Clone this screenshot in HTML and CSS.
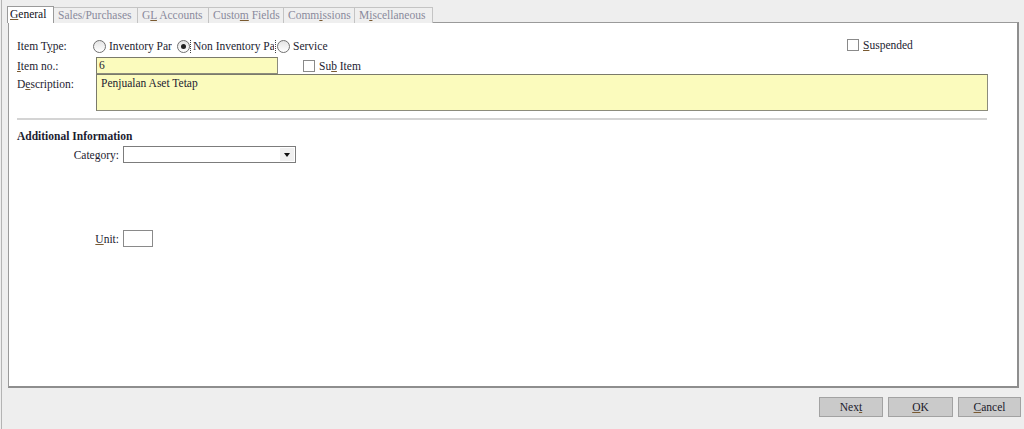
FILE: index.html
```html
<!DOCTYPE html>
<html lang="en">
<head>
  <meta charset="UTF-8">
  <title>Item</title>
  <link rel="stylesheet" href="styles.css">
</head>
<body>
  <div class="screen">
    <div class="tabs">
      <div class="tab active t-general"><u>G</u>eneral</div>
      <div class="tab t-sales">Sales/Purchases</div>
      <div class="tab t-gl">G<u>L</u> Accounts</div>
      <div class="tab t-custom">Custo<u>m</u> Fields</div>
      <div class="tab t-comm">Comm<u>i</u>ssions</div>
      <div class="tab t-misc">M<u>i</u>scellaneous</div>
    </div>

    <div class="panel">
      <div class="row row-type">
        <label class="lbl lbl-type">Item T<u>y</u>pe:</label>
        <div class="radio r-inv"><span class="dot"></span><span class="rtext">Inventory Part</span></div>
        <div class="radio r-non"><span class="dot checked"></span><span class="rtext focus">Non Inventory Part</span></div>
        <div class="radio r-svc"><span class="dot"></span><span class="rtext">Service</span></div>
        <div class="check c-susp"><span class="box"></span><span><u>S</u>uspended</span></div>
      </div>

      <div class="row row-no">
        <label class="lbl lbl-no"><u>I</u>tem no.:</label>
        <div class="field f-no">6</div>
        <div class="check c-sub"><span class="box"></span><span>Su<u>b</u> Item</span></div>
      </div>

      <div class="row row-desc">
        <label class="lbl lbl-desc">D<u>e</u>scription:</label>
        <div class="field f-desc">Penjualan Aset Tetap</div>
      </div>

      <div class="sep"></div>

      <div class="section">Additional Information</div>

      <div class="row row-cat">
        <label class="lbl lbl-right">Category:</label>
        <div class="select">
          <span class="arrow"></span>
        </div>
      </div>

      <div class="row row-unit">
        <label class="lbl lbl-right"><u>U</u>nit:</label>
        <div class="unit"></div>
      </div>
    </div>

    <div class="buttons">
      <div class="btn b-next">Nex<u>t</u></div>
      <div class="btn b-ok"><u>O</u>K</div>
      <div class="btn b-cancel"><u>C</u>ancel</div>
    </div>
  </div>
</body>
</html>
```

FILE: styles.css
```css
body {
  margin: 0;
  background: #eeeeee;
  font-family: "Liberation Serif", "DejaVu Serif", "Times New Roman", serif;
  font-size: 11.5px;
  color: #1c1c30;
}
u {
  text-decoration-color: #7a5a30;
}
.screen {
  width: 1024px;
  height: 429px;
  border-left: 1px solid #b4b4b4;
  margin-left: 1px;
  box-sizing: border-box;
  overflow: hidden;
}
.tabs {
  display: flex;
  margin-left: 5px;
  padding-top: 6px;
  height: 16px;
}
.tab {
  box-sizing: border-box;
  height: 16px;
  margin-top: 1px;
  padding-left: 4px;
  line-height: 14px;
  border: 1px solid #c4c4c4;
  border-bottom: none;
  border-left: none;
  color: #8a8a9c;
  background: #efefef;
  white-space: nowrap;
  overflow: hidden;
}
.tab.active {
  margin-top: 0;
  height: 17px;
  padding-left: 2px;
  border: 1px solid #9a9a9a;
  border-bottom: none;
  background: #ffffff;
  color: #101020;
  position: relative;
  z-index: 1;
}
.t-general { width: 47px; }
.t-sales { width: 84px; }
.t-gl { width: 71px; }
.t-custom { width: 75px; }
.t-comm { width: 71px; }
.t-misc { width: 78px; }

.panel {
  margin-left: 6px;
  width: 1011px;
  height: 366px;
  box-sizing: border-box;
  background: #ffffff;
  border: 1px solid #9a9a9a;
  border-right: 2px solid #8e8e8e;
  border-bottom: 2px solid #8e8e8e;
  padding: 14px 0 0 8px;
}
.row {
  display: flex;
  align-items: center;
}
.lbl {
  display: block;
  white-space: nowrap;
}
.row-type {
  height: 18px;
}
.lbl-type { width: 76px; }
.radio {
  display: flex;
  align-items: center;
  overflow: hidden;
  white-space: nowrap;
  flex: none;
}
.r-inv { width: 84px; }
.r-non { width: 100px; }
.r-svc { width: 60px; }
.dot {
  width: 11px;
  height: 11px;
  flex: none;
  border: 1px solid #707070;
  border-radius: 50%;
  background: linear-gradient(#e4e4e4, #ffffff);
  margin-right: 2px;
  position: relative;
}
.dot.checked::after {
  content: "";
  position: absolute;
  left: 3px;
  top: 3px;
  width: 5px;
  height: 5px;
  border-radius: 50%;
  background: #222222;
}
.rtext {
  overflow: hidden;
  line-height: 14px;
  padding: 0 1px;
}
.r-inv .rtext { width: 62px; }
.r-non .rtext { width: 80px; }
.focus {
  outline: 1px dotted #404040;
  outline-offset: 1px;
}
.check {
  display: flex;
  align-items: center;
  white-space: nowrap;
}
.box {
  width: 10px;
  height: 10px;
  border: 1px solid #8a8a8a;
  background: #ffffff;
  margin-right: 4px;
}
.c-susp {
  margin-left: 510px;
  margin-top: -3px;
}
.row-no {
  height: 17px;
  margin-top: 2px;
}
.lbl-no { width: 79px; }
.field {
  box-sizing: border-box;
  background: #fbfbbd;
  border: 1px solid #8c8c7c;
  border-top-color: #7a7a6a;
  border-left-color: #7a7a6a;
  padding: 1px 3px;
}
.f-no {
  width: 182px;
  height: 17px;
  line-height: 13px;
  padding-left: 2px;
}
.c-sub { margin-left: 25px; }
.row-desc {
  align-items: flex-start;
  height: 37px;
}
.lbl-desc {
  width: 79px;
  padding-top: 4px;
}
.f-desc {
  width: 892px;
  height: 37px;
  padding: 2px 4px;
}
.sep {
  width: 970px;
  height: 2px;
  background: #d4d4d4;
  margin-top: 7px;
}
.section {
  font-weight: bold;
  margin-top: 9px;
  height: 14px;
  line-height: 14px;
}
.lbl-right {
  width: 106px;
  text-align: right;
  padding-right: 4px;
  box-sizing: border-box;
}
.row-cat {
  margin-top: 3px;
  height: 17px;
}
.select {
  box-sizing: border-box;
  width: 173px;
  height: 17px;
  border: 1px solid #7c7c7c;
  background: #ffffff;
  display: flex;
  justify-content: flex-end;
  padding: 1px;
}
.arrow {
  width: 14px;
  height: 13px;
  background: #f0f0f0;
  position: relative;
}
.arrow::after {
  content: "";
  position: absolute;
  left: 4px;
  top: 5px;
  border-left: 3px solid transparent;
  border-right: 3px solid transparent;
  border-top: 4px solid #111111;
}
.row-unit {
  margin-top: 67px;
  height: 17px;
}
.unit {
  width: 30px;
  height: 17px;
  box-sizing: border-box;
  border: 1px solid #8a8a8a;
  background: #ffffff;
}
.buttons {
  display: flex;
  justify-content: flex-end;
  gap: 5px;
  margin-top: 9px;
  padding-right: 4px;
}
.btn {
  box-sizing: border-box;
  height: 20px;
  line-height: 18px;
  text-align: center;
  background: #cacaca;
  border: 1px solid #a2a2a2;
  color: #1a1a2a;
}
.b-next { width: 64px; }
.b-ok { width: 65px; }
.b-cancel { width: 63px; }
```
